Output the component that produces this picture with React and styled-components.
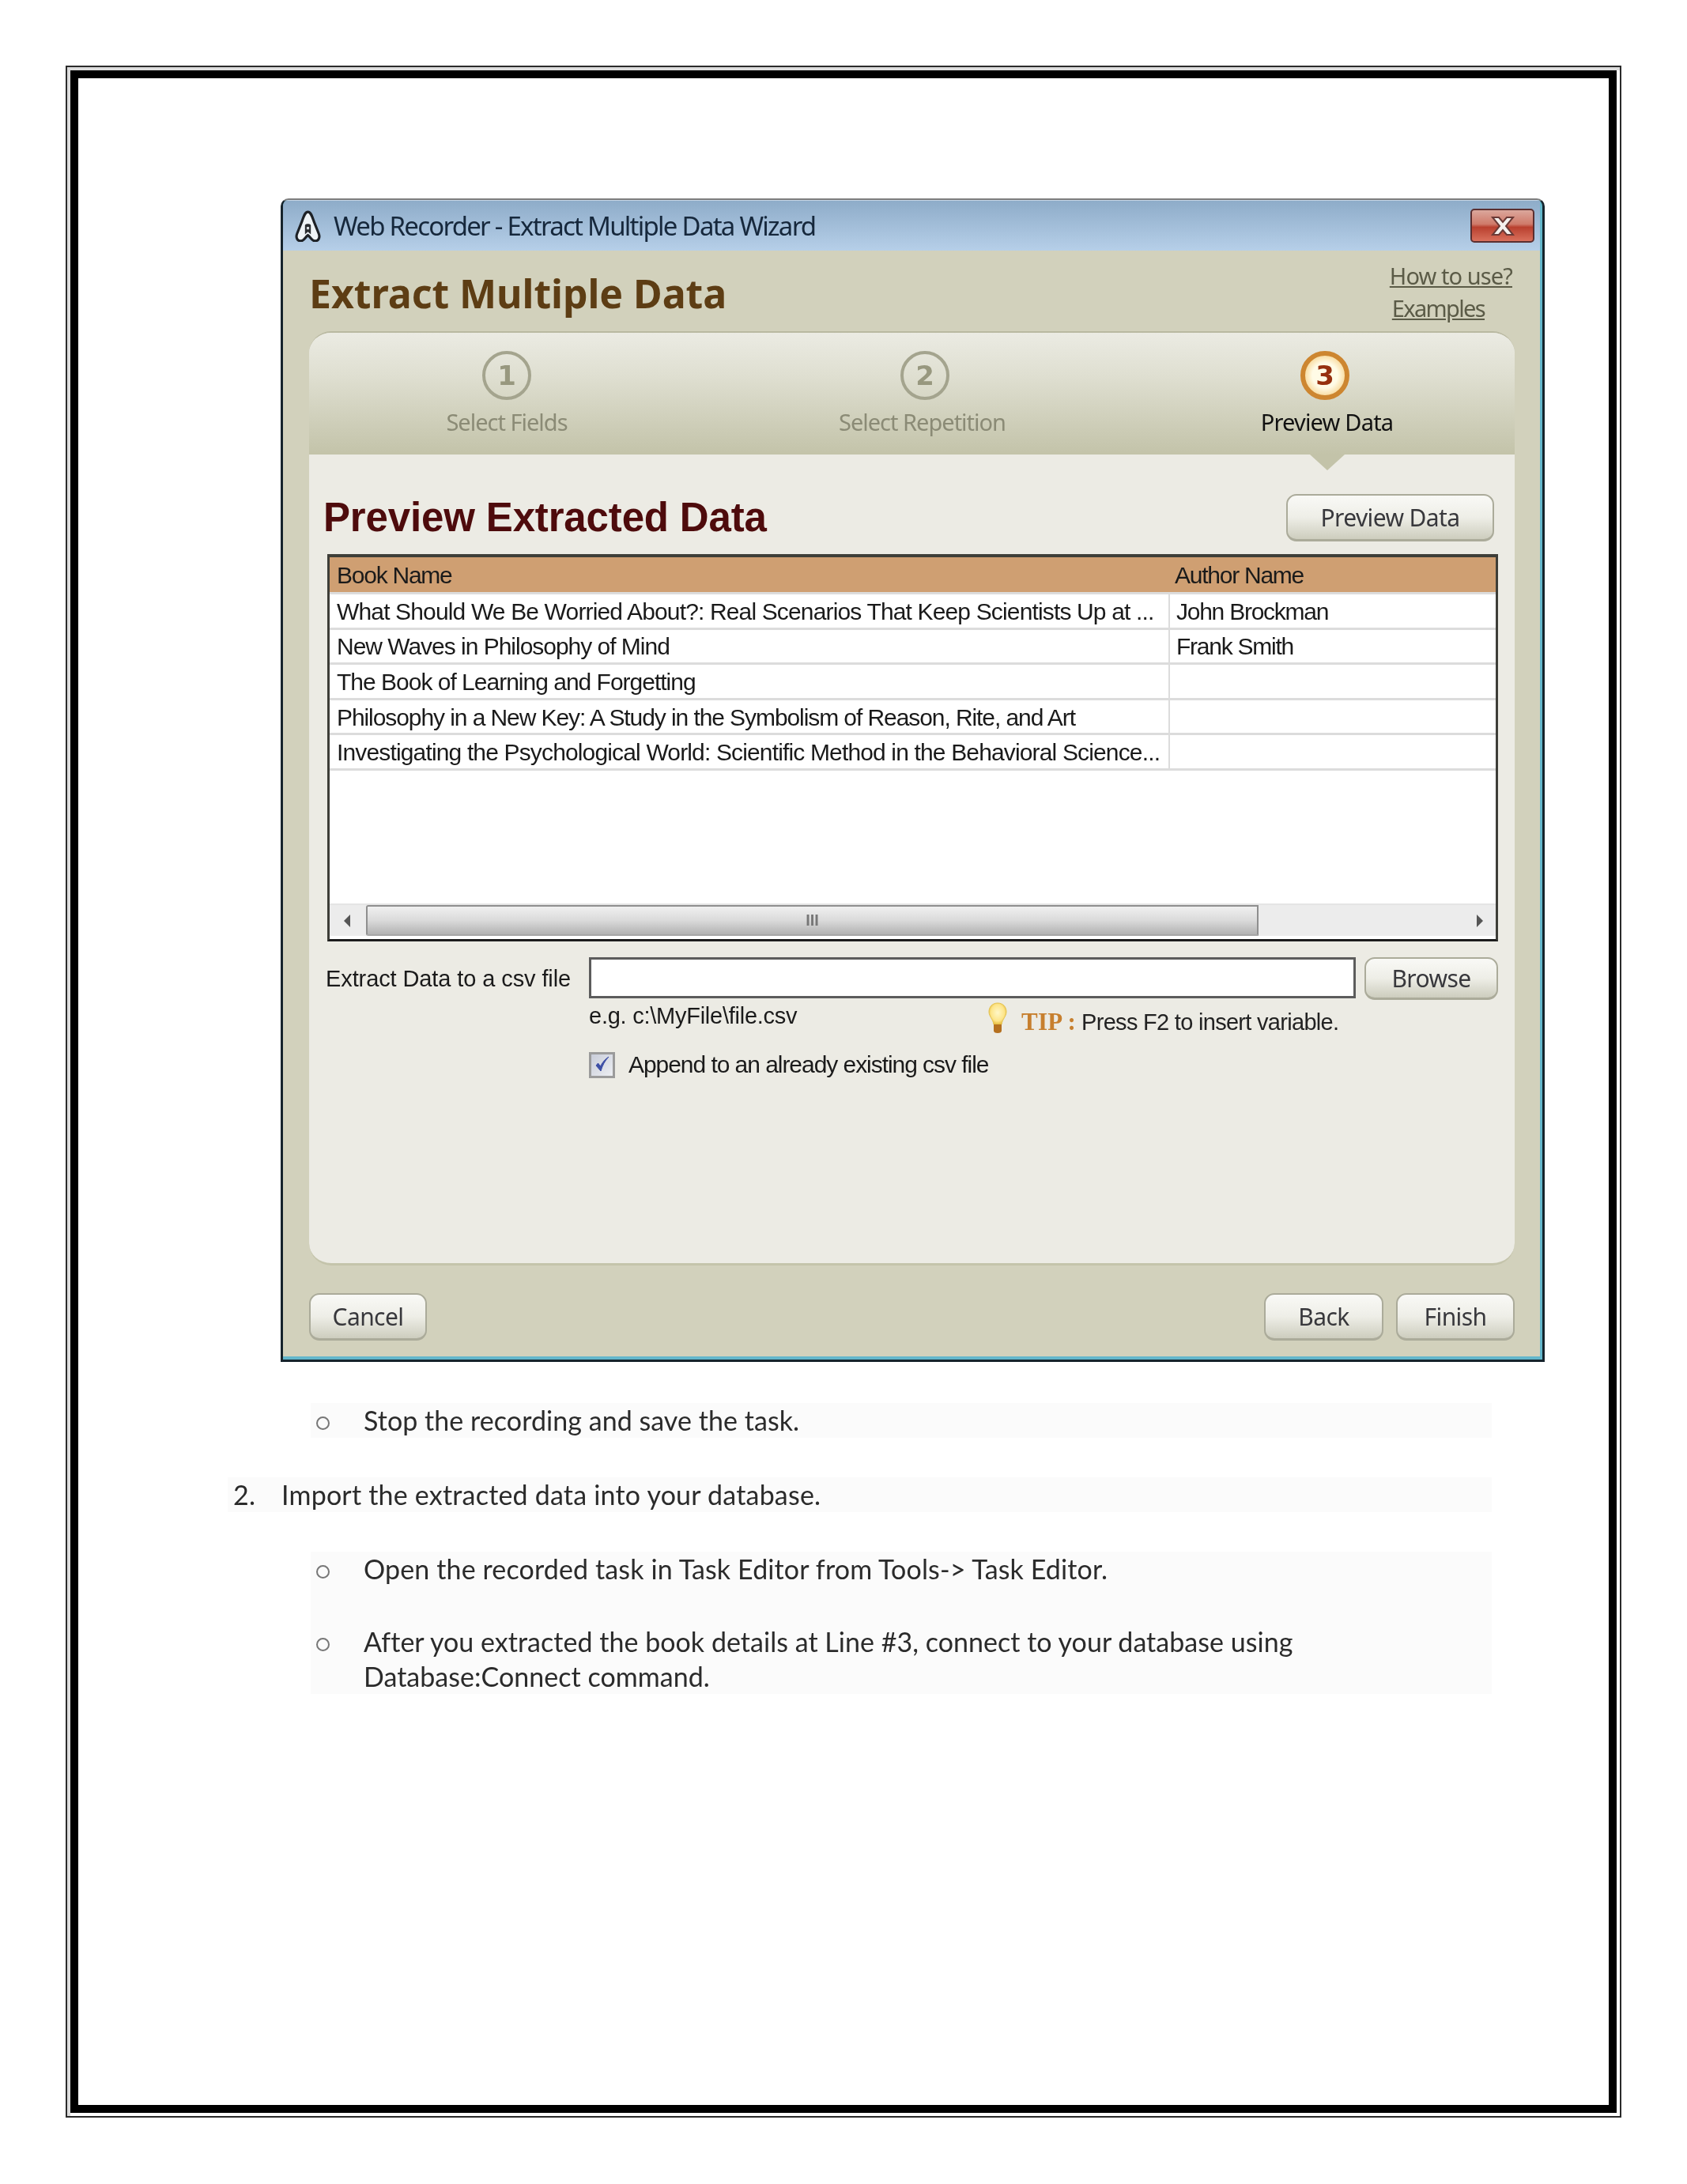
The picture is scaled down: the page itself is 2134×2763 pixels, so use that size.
import React from "react";
import styled, { createGlobalStyle } from "styled-components";

const GlobalStyle = createGlobalStyle`
    html, body {
        margin: 0;
        padding: 0;
        background: #fff;
    }
    * {
        box-sizing: border-box;
    }
`;

const UI_FONT = `"Noto Sans", "Open Sans", sans-serif`;
const ARIAL = `"Liberation Sans", Arial, sans-serif`;

const Page = styled.div`
    width: 2134px;
    height: 2763px;
    padding: 83px 0 0 83px;
`;

const OuterFrame = styled.div`
    width: 1968px;
    height: 2596px;
    border: 2px solid #2a2a2a;
    padding: 4px;
    box-shadow: inset 4px 4px 0 #dcdcdc;
`;

const InnerFrame = styled.div`
    height: 100%;
    border: 10px solid #000;
    padding: 152px 0 0 256px;
`;

const Window = styled.div`
    width: 1599px;
    height: 1472px;
    background: #63b6cb;
    border: solid #16242c;
    border-width: 2px 3px 3px 3px;
    border-top-color: #7d7d7d;
    border-radius: 10px 10px 0 0;
    padding: 0 3px 4px 0;
    display: flex;
    flex-direction: column;
    overflow: hidden;
    filter: blur(0.6px);
`;

const TitleBar = styled.div`
    height: 64px;
    flex: none;
    display: flex;
    align-items: center;
    padding: 0 7px 0 15px;
    background: linear-gradient(to bottom, #8eacc9, #b6cfe8);
    border-top: 1px solid #c5d5e5;
`;

const TitleText = styled.span`
    margin-left: 16px;
    font-family: ${UI_FONT};
    font-size: 33px;
    letter-spacing: -1.75px;
    color: #16283c;
`;

const CloseButton = styled.div`
    margin-left: auto;
    width: 81px;
    height: 43px;
    border: 2px solid #5b2f30;
    border-radius: 5px;
    background: linear-gradient(to bottom, #dba79c 0%, #cf7a6a 45%, #b9402f 55%, #d9705c 100%);
    display: flex;
    align-items: center;
    justify-content: center;
`;

const Body = styled.div`
    flex: 1;
    background: #d2d1bc;
    padding: 0 32px 0 33px;
    display: flex;
    flex-direction: column;
`;

const HeaderRow = styled.div`
    height: 102px;
    flex: none;
    display: flex;
    justify-content: space-between;
    align-items: flex-start;
    padding-right: 3px;
`;

const WizardTitle = styled.h1`
    margin: 22px 0 0;
    font-family: ${UI_FONT};
    font-size: 50px;
    line-height: 64px;
    font-weight: 700;
    letter-spacing: -0.05px;
    color: #5d3d14;
`;

const LinkStack = styled.div`
    margin-top: 11px;
    display: flex;
    flex-direction: column;
    align-items: flex-start;
`;

const HelpLink = styled.a`
    margin-left: ${({ $tight }) => ($tight ? 3 : 0)}px;
    font-family: ${UI_FONT};
    font-size: 29px;
    line-height: 41px;
    letter-spacing: ${({ $tight }) => ($tight ? -1.65 : -0.9)}px;
    color: #5b5b47;
    text-decoration: underline;
`;

const Panel = styled.div`
    height: 1182px;
    flex: none;
    background: #ecebe4;
    border-top: 2px solid #b9b9a1;
    border-bottom: 3px solid #c4c4ab;
    border-radius: 28px;
    overflow: hidden;
    display: flex;
    flex-direction: column;
`;

const Steps = styled.div`
    height: 154px;
    flex: none;
    display: grid;
    grid-template-columns: 500px 558px 454px;
    background: linear-gradient(to bottom, #ebebe3 0%, #dfdfd1 35%, #c3c3a9 100%);
`;

const Step = styled.div`
    position: relative;
    display: flex;
    flex-direction: column;
    align-items: center;
    padding-top: 23px;

    ${({ $active }) =>
        $active &&
        `
        &::after {
            content: "";
            position: absolute;
            left: 208px;
            bottom: -20px;
            border-style: solid;
            border-width: 20px 22px 0 22px;
            border-color: #c3c3a9 transparent transparent transparent;
        }
    `}
`;

const StepCircle = styled.div`
    width: 62px;
    height: 62px;
    border-radius: 50%;
    display: flex;
    align-items: center;
    justify-content: center;
    font-family: "DejaVu Sans", sans-serif;
    font-weight: 700;
    font-size: 34px;
    color: ${({ $active }) => ($active ? "#96300f" : "#98987f")};
    border: ${({ $active }) => ($active ? "6px solid #cd8630" : "4px solid #a4a48e")};
    background: ${({ $active }) =>
        $active ? "radial-gradient(circle, #fffbe6 45%, #f9dfa8 70%, #e6a650 100%)" : "transparent"};
`;

const StepLabel = styled.div`
    margin: 8px ${({ $nudge }) => ($nudge < 0 ? -$nudge : 0)}px 0 ${({ $nudge }) => ($nudge > 0 ? $nudge : 0)}px;
    font-family: ${UI_FONT};
    font-size: 29px;
    line-height: 40px;
    letter-spacing: ${({ $active }) => ($active ? -0.8 : -1)}px;
    color: ${({ $active }) => ($active ? "#111" : "#8b8b76")};
`;

const Content = styled.div`
    flex: 1;
    padding: 0 21px 0 23px;
`;

const ContentHead = styled.div`
    height: 110px;
    margin-left: -5px;
    padding: 48px 5px 0 0;
    display: flex;
    justify-content: space-between;
    align-items: center;
`;

const SectionTitle = styled.h2`
    margin: 0;
    font-family: ${ARIAL};
    font-size: 51px;
    font-weight: 700;
    letter-spacing: -0.15px;
    color: #4e0b0c;
`;

const Button = styled.div`
    width: ${({ $w }) => $w}px;
    height: ${({ $h }) => $h || 60}px;
    margin-top: ${({ $lift }) => ($lift ? 2 : 0)}px;
    flex: none;
    display: flex;
    align-items: center;
    justify-content: center;
    border: 2px solid #abab9a;
    border-bottom-width: 3px;
    border-radius: 13px;
    background: linear-gradient(to bottom, #f9f9f6 0%, #eeeee7 50%, #cdcdbe 100%);
    font-family: ${UI_FONT};
    font-size: 30px;
    letter-spacing: -0.6px;
    color: #38383c;
`;

const Table = styled.div`
    height: 490px;
    margin-top: 16px;
    display: flex;
    flex-direction: column;
    background: #fff;
    border: solid #3e3e38;
    border-width: 4px 3px 3px 3px;
    border-bottom-color: #1c1c1c;
`;

const TableHeader = styled.div`
    height: 44px;
    flex: none;
    display: grid;
    grid-template-columns: 1061px 1fr;
    align-items: center;
    background: #cf9f72;
`;

const TableRow = styled.div`
    height: 44.6px;
    flex: none;
    display: grid;
    grid-template-columns: 1061px 1fr;
    align-items: stretch;
    border-top: 3px solid #dcdcdc;
    &:first-of-type {
        border-top: 0;
    }
`;

const Cell = styled.div`
    display: flex;
    align-items: center;
    padding: 2px 0 0 ${({ $second }) => ($second ? 8 : 9)}px;
    border-left: ${({ $second, $plain }) => ($second && !$plain ? "2px solid #dcdcdc" : "0")};
    font-family: ${ARIAL};
    font-size: 30px;
    letter-spacing: ${({ $tracking }) => $tracking ?? -1.25}px;
    color: #1a1a1a;
    white-space: nowrap;
    overflow: hidden;
`;

const RowsEnd = styled.div`
    flex: 1;
    border-top: 3px solid #dcdcdc;
`;

const ScrollBar = styled.div`
    height: 41px;
    flex: none;
    margin-bottom: 4px;
    display: flex;
    background: #ececec;
    border-top: 2px solid #e4e4e4;
`;

const ScrollArrow = styled.div`
    width: 44px;
    flex: none;
    margin-right: 2px;
    display: flex;
    align-items: center;
    justify-content: center;
`;

const ScrollThumb = styled.div`
    width: 1129px;
    flex: none;
    display: flex;
    align-items: center;
    justify-content: center;
    border: 2px solid #8f8f8f;
    border-bottom-color: #a6a6a6;
    border-radius: 3px 0 0 3px;
    background: linear-gradient(to bottom, #f0f0f0 0%, #dadada 50%, #b2b2b2 100%);
    font-family: ${ARIAL};
    font-size: 20px;
    font-weight: 700;
    letter-spacing: 0;
    color: #777;
`;

const ScrollTrackEnd = styled.div`
    flex: 1;
    display: flex;
    align-items: center;
    justify-content: flex-end;
    padding-right: 16px;
`;

const FileRow = styled.div`
    margin: 20px 0 0 -2px;
    display: flex;
    align-items: flex-start;
`;

const FieldLabel = styled.div`
    width: 333px;
    flex: none;
    align-self: center;
    font-family: ${ARIAL};
    font-size: 29px;
    letter-spacing: -0.1px;
    color: #1a1a1a;
`;

const FileInput = styled.div`
    width: 970px;
    height: 52px;
    flex: none;
    margin-right: 11px;
    background: #fff;
    border: 3px solid #5c5c5c;
`;

const HintRow = styled.div`
    margin: 3px 0 0 331px;
    display: flex;
    align-items: flex-start;
`;

const Example = styled.div`
    width: 505px;
    flex: none;
    font-family: ${ARIAL};
    font-size: 29px;
    line-height: 34px;
    letter-spacing: -0.25px;
    color: #1a1a1a;
`;

const TipBox = styled.div`
    display: flex;
    align-items: center;
    gap: 18px;
    height: 40px;
`;

const TipText = styled.div`
    margin-top: 10px;
    font-family: ${ARIAL};
    font-size: 29px;
    letter-spacing: -0.7px;
    color: #222;
    white-space: pre;
`;

const TipLabel = styled.span`
    font-family: "Liberation Serif", serif;
    font-weight: 700;
    font-size: 31px;
    letter-spacing: 0.2px;
    color: #c77f2e;
    margin-right: 7px;
`;

const AppendRow = styled.div`
    margin: 22px 0 0 331px;
    display: flex;
    align-items: center;
    gap: 17px;
`;

const CheckBox = styled.div`
    width: 33px;
    height: 33px;
    flex: none;
    display: flex;
    align-items: center;
    justify-content: center;
    border: 3px solid #9b9b9b;
    background: linear-gradient(135deg, #c9cdd9, #eceef2);
`;

const CheckLabel = styled.div`
    font-family: ${ARIAL};
    font-size: 30px;
    letter-spacing: -1.05px;
    color: #1a1a1a;
`;

const Footer = styled.div`
    flex: 1;
    display: flex;
    gap: 16px;
    padding-top: 35px;
`;

const FooterSpacer = styled.div`
    flex: 1;
`;

const NotesList = styled.div`
    margin: 52px 0 0 -67px;
    width: 1599px;
    display: flex;
    flex-direction: column;
    gap: 50px;
    filter: blur(0.4px);
`;

const Strip = styled.div`
    margin-left: ${({ $nested }) => ($nested ? 105 : 0)}px;
    background: #fbfbfb;
    display: flex;
    flex-direction: column;
    gap: 48px;
`;

const ListItem = styled.div`
    display: grid;
    grid-template-columns: ${({ $nested }) => ($nested ? "67px" : "68px")} 1fr;
    font-family: Lato, "Open Sans", sans-serif;
    font-size: 34px;
    line-height: 44px;
    letter-spacing: ${({ $tracking }) => $tracking}px;
    color: #2b2b2b;
`;

const Bullet = styled.div`
    width: 17px;
    height: 17px;
    margin: 17px 0 0 7px;
    border: 2px solid #777;
    border-radius: 50%;
`;

const Number = styled.div`
    padding-left: 7px;
`;

const rows = [
    {
        book: "What Should We Be Worried About?: Real Scenarios That Keep Scientists Up at ...",
        author: "John Brockman",
        tracking: -0.85,
    },
    { book: "New Waves in Philosophy of Mind", author: "Frank Smith", tracking: -1.02 },
    { book: "The Book of Learning and Forgetting", author: "", tracking: -1 },
    { book: "Philosophy in a New Key: A Study in the Symbolism of Reason, Rite, and Art", author: "", tracking: -1.08 },
    {
        book: "Investigating the Psychological World: Scientific Method in the Behavioral Science...",
        author: "",
        tracking: -0.85,
    },
];

const Logo = () => (
    <svg width="33" height="40" viewBox="2 1 29 38">
        <path
            d="M16.5 3C13 3 11.5 8 9.5 14L3.5 29C1.5 34 4 38 8 38C12 38 13.5 33 16.5 31C19.5 33 21 38 25 38C29 38 31.5 34 29.5 29L23.5 14C21.5 8 20 3 16.5 3Z"
            fill="#eef3f6"
            stroke="#1d2126"
            strokeWidth="3"
        />
        <path d="M13 30V19C13 17 20 17 20 19V30L16.5 27Z" fill="#2a2d31" />
        <path d="M15 21H18V24H15Z" fill="#d8dde0" />
    </svg>
);

const CloseIcon = () => (
    <svg width="34" height="26" viewBox="0 0 34 26">
        <path
            d="M4 2H12L17 8L22 2H30L21 13L30 24H22L17 18L12 24H4L13 13Z"
            fill="#f4f1ee"
            stroke="#6b3a36"
            strokeWidth="2"
        />
    </svg>
);

const Bulb = () => (
    <svg width="24" height="40" viewBox="0 0 24 40">
        <defs>
            <radialGradient id="glass" cx="50%" cy="45%" r="55%">
                <stop offset="0%" stopColor="#fff7c8" />
                <stop offset="70%" stopColor="#fde58a" />
                <stop offset="100%" stopColor="#e8bd3e" />
            </radialGradient>
        </defs>
        <path
            d="M12 1C5 1 1 6 1 12C1 18 6 21 7 28H17C18 21 23 18 23 12C23 6 19 1 12 1Z"
            fill="url(#glass)"
            stroke="#e3c24f"
        />
        <path d="M7 28H17V36C17 38 15 39 12 39C9 39 7 38 7 36Z" fill="#b5701f" />
    </svg>
);

const Check = () => (
    <svg width="24" height="24" viewBox="0 0 24 24">
        <path d="M4 13L10 20C12 13 15 7 20 2C14 6 11 11 9.5 14L6.5 10Z" fill="#3d4fa6" stroke="#3d4fa6" />
    </svg>
);

const Arrow = ({ right }) => (
    <svg width="9" height="16" viewBox="0 0 9 16">
        <path d={right ? "M1 0L9 8L1 16Z" : "M8 0L0 8L8 16Z"} fill="#555" />
    </svg>
);

const App = () => {
    return (
        <Page>
            <GlobalStyle />
            <OuterFrame>
                <InnerFrame>
                    <Window>
                        <TitleBar>
                            <Logo />
                            <TitleText>Web Recorder - Extract Multiple Data Wizard</TitleText>
                            <CloseButton>
                                <CloseIcon />
                            </CloseButton>
                        </TitleBar>
                        <Body>
                            <HeaderRow>
                                <WizardTitle>Extract Multiple Data</WizardTitle>
                                <LinkStack>
                                    <HelpLink>How to use?</HelpLink>
                                    <HelpLink $tight>Examples</HelpLink>
                                </LinkStack>
                            </HeaderRow>
                            <Panel>
                                <Steps>
                                    <Step>
                                        <StepCircle>1</StepCircle>
                                        <StepLabel>Select Fields</StepLabel>
                                    </Step>
                                    <Step>
                                        <StepCircle>2</StepCircle>
                                        <StepLabel $nudge={-7}>Select Repetition</StepLabel>
                                    </Step>
                                    <Step $active>
                                        <StepCircle $active>3</StepCircle>
                                        <StepLabel $active $nudge={5}>
                                            Preview Data
                                        </StepLabel>
                                    </Step>
                                </Steps>
                                <Content>
                                    <ContentHead>
                                        <SectionTitle>Preview Extracted Data</SectionTitle>
                                        <Button $w={263} $lift>
                                            Preview Data
                                        </Button>
                                    </ContentHead>
                                    <Table>
                                        <TableHeader>
                                            <Cell>Book Name</Cell>
                                            <Cell $second $plain>
                                                Author Name
                                            </Cell>
                                        </TableHeader>
                                        {rows.map((r, i) => (
                                            <TableRow key={i}>
                                                <Cell $tracking={r.tracking}>{r.book}</Cell>
                                                <Cell $second>{r.author}</Cell>
                                            </TableRow>
                                        ))}
                                        <RowsEnd />
                                        <ScrollBar>
                                            <ScrollArrow>
                                                <Arrow />
                                            </ScrollArrow>
                                            <ScrollThumb>III</ScrollThumb>
                                            <ScrollTrackEnd>
                                                <Arrow right />
                                            </ScrollTrackEnd>
                                        </ScrollBar>
                                    </Table>
                                    <FileRow>
                                        <FieldLabel>Extract Data to a csv file</FieldLabel>
                                        <FileInput />
                                        <Button $w={169} $h={54}>
                                            Browse
                                        </Button>
                                    </FileRow>
                                    <HintRow>
                                        <Example>e.g. c:\MyFile\file.csv</Example>
                                        <TipBox>
                                            <Bulb />
                                            <TipText>
                                                <TipLabel>TIP :</TipLabel>Press F2 to insert variable.
                                            </TipText>
                                        </TipBox>
                                    </HintRow>
                                    <AppendRow>
                                        <CheckBox>
                                            <Check />
                                        </CheckBox>
                                        <CheckLabel>Append to an already existing csv file</CheckLabel>
                                    </AppendRow>
                                </Content>
                            </Panel>
                            <Footer>
                                <Button $w={149}>Cancel</Button>
                                <FooterSpacer />
                                <Button $w={151}>Back</Button>
                                <Button $w={150}>Finish</Button>
                            </Footer>
                        </Body>
                    </Window>
                    <NotesList>
                        <Strip $nested>
                            <ListItem $nested $tracking={0.05}>
                                <Bullet />
                                <span>Stop the recording and save the task.</span>
                            </ListItem>
                        </Strip>
                        <Strip>
                            <ListItem $tracking={0.2}>
                                <Number>2.</Number>
                                <span>Import the extracted data into your database.</span>
                            </ListItem>
                        </Strip>
                        <Strip $nested>
                            <ListItem $nested $tracking={0.13}>
                                <Bullet />
                                <span>Open the recorded task in Task Editor from Tools-&gt; Task Editor.</span>
                            </ListItem>
                            <ListItem $nested $tracking={0.03}>
                                <Bullet />
                                <span>
                                    After you extracted the book details at Line #3, connect to your database using
                                    <br />
                                    Database:Connect command.
                                </span>
                            </ListItem>
                        </Strip>
                    </NotesList>
                </InnerFrame>
            </OuterFrame>
        </Page>
    );
};

export default App;
